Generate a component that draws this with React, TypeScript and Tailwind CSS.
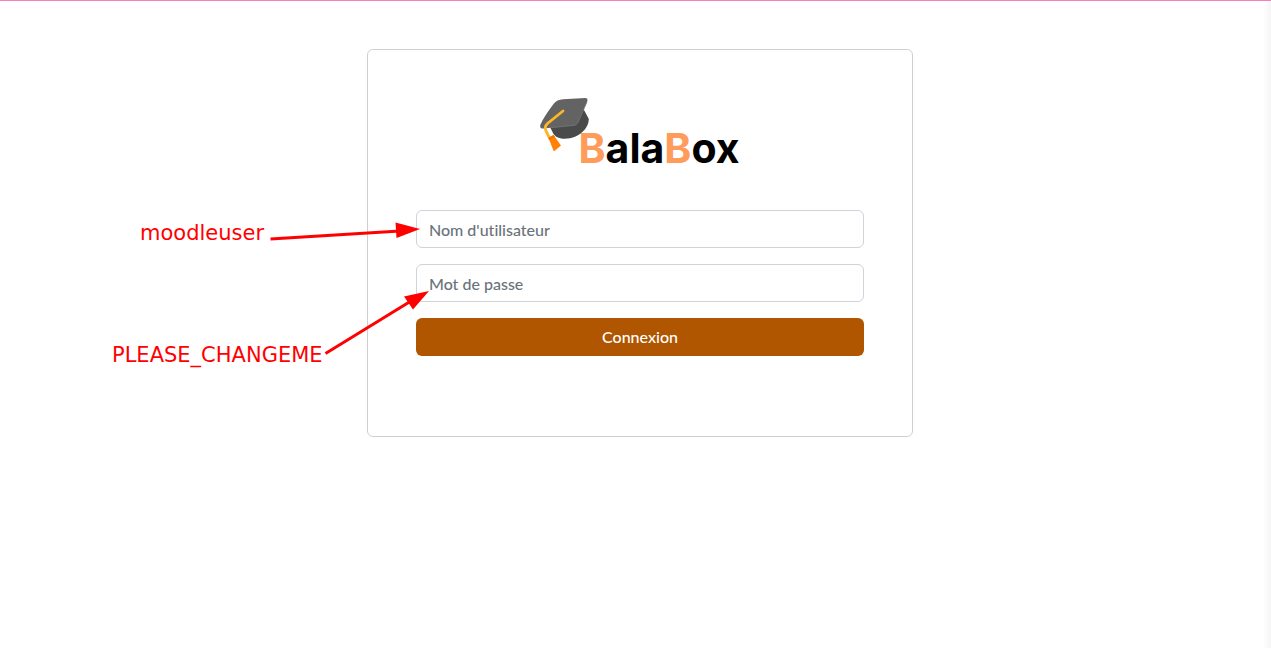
import React from "react";

function GraduationCap() {
  return (
    <svg viewBox="0 0 50 54" className="h-[54px] w-[50px] shrink-0" aria-hidden="true">
      <path d="M9 27 L13.500 36 C17 41.500 27 42 35.500 38.500 C42 35.500 48.800 29 48.800 21 L43.500 11 Z" fill="#4a4a4a" />
      <path
        d="M23 1.200 L45.500 0 Q48.500 .2 47 4 L38 24.500 Q36.800 27 34 27.400 L3 30.500 Q-.5 30.500 .3 27 Q3 20 13.500 6 Q17 1.500 23 1.200 Z"
        fill="#636363"
      />
      <path d="M47 4 L38 24.500 Q36.800 27 34 27.400 L10 29.800" fill="none" stroke="#7b7b7b" strokeWidth=".7" />
      <path
        d="M23 13 L7.500 25.500 Q4 29 6 33 L10 41"
        fill="none"
        stroke="#fbb726"
        strokeWidth="2.800"
        strokeLinecap="round"
        strokeLinejoin="round"
      />
      <path d="M8.500 39.800 L13.500 37 L21 47.500 L14.500 53 Q13.500 53 13 51.500 Z" fill="#ff8206" />
      <path d="M8.500 39.800 L13.500 37 L15 39 L9.300 42 Z" fill="#f57400" />
    </svg>
  );
}

function Logo() {
  return (
    <h1 className="flex h-16 justify-center" aria-label="BalaBox">
      <GraduationCap />
      <span className="-ml-3 mt-7 font-['Inter',sans-serif] text-[41px]/[44px] font-bold text-black">
        <span className="text-[#ff9b5b]">B</span>ala<span className="text-[#ff9b5b]">B</span>ox
      </span>
    </h1>
  );
}

const field =
  "block h-[38px] w-full rounded-md border border-[#ced4da] bg-white px-3 text-base font-medium text-[#495057] placeholder:text-[#6a737b] placeholder:opacity-100";

function Annotations() {
  return (
    <div className="pointer-events-none absolute -left-64 top-[160px] h-[160px] w-80 font-['DejaVu_Sans',sans-serif] text-[21px]/[26px] text-[#ff0000]">
      <svg viewBox="0 0 320 160" className="absolute inset-0 h-full w-full" aria-hidden="true">
        <g stroke="#ff0000" strokeWidth="3" fill="#ff0000">
          <path d="M158.500 29 L288 21" />
          <path d="M213.500 143.500 L299 91" />
        </g>
        <path d="M308 19 L283.500 12.500 L284.500 28 Z" fill="#ff0000" />
        <path d="M317 81 L292 86.500 L301 99.500 Z" fill="#ff0000" />
      </svg>
      <span className="absolute left-7 top-[10px]">moodleuser</span>
      <span className="absolute left-0 top-[132px]">PLEASE_CHANGEME</span>
    </div>
  );
}

export default function App() {
  return (
    <div className="flex min-h-screen flex-col border-t border-[#f77fbe] bg-[linear-gradient(to_left,#f5f5f5,#ffffff_8px)] pl-[9px] font-['Lato',sans-serif] [font-variant-ligatures:none]">
      <main className="relative mx-auto mt-12 w-full max-w-[546px] rounded-md border border-[#cfcfcf] bg-white px-12 pb-20 pt-12">
        <Logo />
        <form className="mt-12 flex flex-col gap-4" onSubmit={(e) => e.preventDefault()}>
          <input className={field} type="text" aria-label="Nom d'utilisateur" placeholder="Nom d'utilisateur" />
          <input className={field} type="password" aria-label="Mot de passe" placeholder="Mot de passe" />
          <button type="submit" className="h-[38px] w-full rounded-md bg-[#b05500] text-base font-medium text-white">
            Connexion
          </button>
        </form>
        <Annotations />
      </main>
    </div>
  );
}
